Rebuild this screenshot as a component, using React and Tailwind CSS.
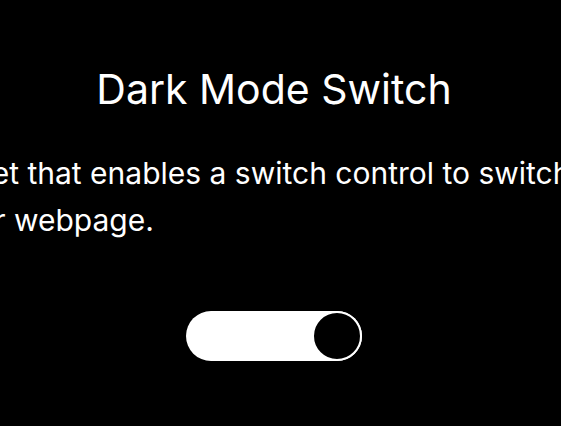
export default function App() {
  return (
    <div
      className="w-[561px] h-[426px] bg-black text-white overflow-hidden"
      style={{ fontFamily: "Inter, 'Noto Sans', sans-serif" }}
    >
      <div className="w-[548px] flex flex-col items-center pt-[65px]">
        <h1 className="text-[41px] leading-[48px] font-normal whitespace-nowrap">
          Dark Mode Switch
        </h1>
      </div>
      <p className="mt-[37px] ml-[-115px] text-[30px] leading-[47px] whitespace-nowrap">
        A snippet that enables a switch control to switch between light and dark mode on
        <br />
        <span className="inline-block pl-[13px]">on your webpage.</span>
      </p>
      <div className="w-[548px] flex justify-center mt-[67px]">
        <button
          type="button"
          aria-label="Toggle dark mode"
          className="w-[176px] h-[50px] rounded-full bg-white flex items-center justify-end"
        >
          <span className="w-[50px] h-[50px] rounded-full bg-black border-2 border-white" />
        </button>
      </div>
    </div>
  );
}
